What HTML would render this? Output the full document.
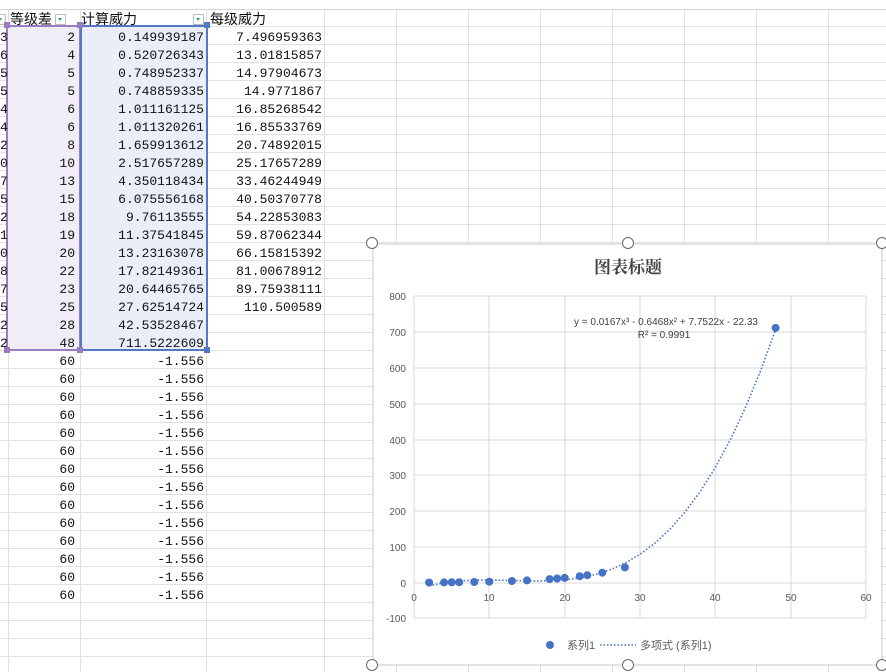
<!DOCTYPE html>
<html><head><meta charset="utf-8"><style>
body{margin:0;width:886px;height:672px;overflow:hidden;background:#fff;position:relative;font-family:"Liberation Mono","Noto Sans CJK SC",monospace;}
.grid{position:absolute;left:0;top:9px;width:886px;height:663px;
background-image:repeating-linear-gradient(to bottom,transparent 0 17px,#e1e1e1 17px 18px);}
.vl{position:absolute;top:0;width:1px;height:672px;background:#e1e1e1}
.top{position:absolute;left:0;top:0;width:886px;height:9px;border-bottom:1px solid #d4d4d4;background:#fff}
.selB{position:absolute;left:6px;top:25px;width:75px;height:326px;background:#f1edf6;border:2px solid #9a7cc0;box-sizing:border-box}
.selC{position:absolute;left:80px;top:25px;width:128px;height:326px;background:#e9eef8;border:2px solid #5677c4;box-sizing:border-box}
table{position:absolute;left:0;top:10px;border-collapse:collapse;border-spacing:0;font-size:13px;color:#111;table-layout:fixed}
tr{height:18px}
td{height:18px;padding:0 5px 0 0;text-align:right;white-space:nowrap;line-height:17px;overflow:hidden;box-sizing:border-box}
td.a{width:8px;padding:0;text-align:left}td.b{width:72px}td.c{width:126px}td.d{width:118px}
tr.h td{text-align:left;font-family:"Liberation Sans","Noto Sans CJK SC",sans-serif;font-size:14px;overflow:visible}
.fl{display:inline-block;width:9px;height:9px;border:1px solid #bbb;background:#fff;vertical-align:middle;position:relative}
.fl:after{content:"";position:absolute;left:2px;top:3px;border-left:2.5px solid transparent;border-right:2.5px solid transparent;border-top:3px solid #2a9d6f}
.h1{position:absolute;width:10px;height:10px;border-radius:50%;border:1px solid #666;background:#fff}
</style></head><body>
<div class="grid"></div>
<div class="vl" style="left:8px"></div><div class="vl" style="left:80px"></div><div class="vl" style="left:206px"></div><div class="vl" style="left:324px"></div>
<div class="vl" style="left:396px"></div><div class="vl" style="left:468px"></div><div class="vl" style="left:540px"></div><div class="vl" style="left:612px"></div><div class="vl" style="left:684px"></div><div class="vl" style="left:756px"></div><div class="vl" style="left:828px"></div>
<div class="top"></div>
<div class="selB"></div><div class="selC"></div>
<table>
<tr class="h"><td class="a"><span class="fl" style="margin-left:-5px"></span></td><td class="b" style="padding-left:2px">等级差<span class="fl" style="margin-left:3px"></span></td><td class="c" style="padding-left:1px">计算威力<span class="fl" style="margin-left:56px"></span></td><td class="d" style="padding-left:1px">每级威力</td></tr>
<tr><td class="a">3</td><td>2</td><td>0.149939187</td><td>7.496959363</td></tr>
<tr><td class="a">6</td><td>4</td><td>0.520726343</td><td>13.01815857</td></tr>
<tr><td class="a">5</td><td>5</td><td>0.748952337</td><td>14.97904673</td></tr>
<tr><td class="a">5</td><td>5</td><td>0.748859335</td><td>14.9771867</td></tr>
<tr><td class="a">4</td><td>6</td><td>1.011161125</td><td>16.85268542</td></tr>
<tr><td class="a">4</td><td>6</td><td>1.011320261</td><td>16.85533769</td></tr>
<tr><td class="a">2</td><td>8</td><td>1.659913612</td><td>20.74892015</td></tr>
<tr><td class="a">0</td><td>10</td><td>2.517657289</td><td>25.17657289</td></tr>
<tr><td class="a">7</td><td>13</td><td>4.350118434</td><td>33.46244949</td></tr>
<tr><td class="a">5</td><td>15</td><td>6.075556168</td><td>40.50370778</td></tr>
<tr><td class="a">2</td><td>18</td><td>9.76113555</td><td>54.22853083</td></tr>
<tr><td class="a">1</td><td>19</td><td>11.37541845</td><td>59.87062344</td></tr>
<tr><td class="a">0</td><td>20</td><td>13.23163078</td><td>66.15815392</td></tr>
<tr><td class="a">8</td><td>22</td><td>17.82149361</td><td>81.00678912</td></tr>
<tr><td class="a">7</td><td>23</td><td>20.64465765</td><td>89.75938111</td></tr>
<tr><td class="a">5</td><td>25</td><td>27.62514724</td><td>110.500589</td></tr>
<tr><td class="a">2</td><td>28</td><td>42.53528467</td><td></td></tr>
<tr><td class="a">2</td><td>48</td><td>711.5222609</td><td></td></tr>
<tr><td class="a"></td><td>60</td><td>-1.556</td><td></td></tr>
<tr><td class="a"></td><td>60</td><td>-1.556</td><td></td></tr>
<tr><td class="a"></td><td>60</td><td>-1.556</td><td></td></tr>
<tr><td class="a"></td><td>60</td><td>-1.556</td><td></td></tr>
<tr><td class="a"></td><td>60</td><td>-1.556</td><td></td></tr>
<tr><td class="a"></td><td>60</td><td>-1.556</td><td></td></tr>
<tr><td class="a"></td><td>60</td><td>-1.556</td><td></td></tr>
<tr><td class="a"></td><td>60</td><td>-1.556</td><td></td></tr>
<tr><td class="a"></td><td>60</td><td>-1.556</td><td></td></tr>
<tr><td class="a"></td><td>60</td><td>-1.556</td><td></td></tr>
<tr><td class="a"></td><td>60</td><td>-1.556</td><td></td></tr>
<tr><td class="a"></td><td>60</td><td>-1.556</td><td></td></tr>
<tr><td class="a"></td><td>60</td><td>-1.556</td><td></td></tr>
<tr><td class="a"></td><td>60</td><td>-1.556</td><td></td></tr>
</table>
<div style="position:absolute;left:4px;top:347px;width:6px;height:6px;background:#9a7cc0"></div>
<div style="position:absolute;left:77px;top:347px;width:6px;height:6px;background:#9a7cc0"></div>
<div style="position:absolute;left:4px;top:22px;width:6px;height:6px;background:#9a7cc0"></div>
<div style="position:absolute;left:77px;top:22px;width:6px;height:6px;background:#9a7cc0"></div>
<div style="position:absolute;left:204px;top:347px;width:6px;height:6px;background:#5677c4"></div>
<div style="position:absolute;left:204px;top:22px;width:6px;height:6px;background:#5677c4"></div>

<svg style="position:absolute;left:0;top:0" width="886" height="672">
<rect x="373" y="244" width="509" height="421" fill="#fff" stroke="#c8c8c8"/>
<text x="628" y="273" text-anchor="middle" font-family="Liberation Sans,Noto Serif CJK SC,sans-serif" font-weight="bold" font-size="17" fill="#444">图表标题</text>
<g stroke="#d9d9d9" stroke-width="1">
<line x1="414" y1="296" x2="866" y2="296"/><line x1="414" y1="332" x2="866" y2="332"/><line x1="414" y1="368" x2="866" y2="368"/><line x1="414" y1="404" x2="866" y2="404"/><line x1="414" y1="440" x2="866" y2="440"/><line x1="414" y1="475" x2="866" y2="475"/><line x1="414" y1="511" x2="866" y2="511"/><line x1="414" y1="547" x2="866" y2="547"/><line x1="414" y1="583" x2="866" y2="583"/><line x1="414" y1="618" x2="866" y2="618"/>
<line x1="414" y1="296" x2="414" y2="618"/><line x1="489" y1="296" x2="489" y2="618"/><line x1="565" y1="296" x2="565" y2="618"/><line x1="640" y1="296" x2="640" y2="618"/><line x1="715" y1="296" x2="715" y2="618"/><line x1="791" y1="296" x2="791" y2="618"/><line x1="866" y1="296" x2="866" y2="618"/>
</g>
<g font-family="Liberation Sans,sans-serif" font-size="10" fill="#595959" text-anchor="end">
<text x="406" y="300">800</text><text x="406" y="336">700</text><text x="406" y="372">600</text><text x="406" y="408">500</text><text x="406" y="444">400</text><text x="406" y="479">300</text><text x="406" y="515">200</text><text x="406" y="551">100</text><text x="406" y="587">0</text><text x="406" y="622">-100</text>
</g>
<g font-family="Liberation Sans,sans-serif" font-size="10" fill="#595959" text-anchor="middle">
<text x="414" y="601">0</text><text x="489" y="601">10</text><text x="565" y="601">20</text><text x="640" y="601">30</text><text x="715" y="601">40</text><text x="791" y="601">50</text><text x="866" y="601">60</text>
</g>
<g fill="#4472c4">
<circle cx="429.1" cy="582.5" r="4"/><circle cx="444.1" cy="582.4" r="4"/><circle cx="451.7" cy="582.3" r="4"/><circle cx="459.2" cy="582.2" r="4"/><circle cx="474.3" cy="582" r="4"/><circle cx="489.3" cy="581.7" r="4"/><circle cx="511.9" cy="581" r="4"/><circle cx="527" cy="580.4" r="4"/><circle cx="549.6" cy="579.1" r="4"/><circle cx="557.1" cy="578.5" r="4"/><circle cx="564.7" cy="577.9" r="4"/><circle cx="579.7" cy="576.2" r="4"/><circle cx="587.3" cy="575.2" r="4"/><circle cx="602.3" cy="572.7" r="4"/><circle cx="624.9" cy="567.4" r="4"/><circle cx="775.6" cy="327.9" r="4"/>
</g>
<g transform="translate(414,582.6) scale(7.533,-0.358)">
<polyline vector-effect="non-scaling-stroke" fill="none" stroke="#4472c4" stroke-width="1.6" stroke-dasharray="1.5 2" points="2,-9.28 4,-0.6 6,4.5 8,6.84 10,7.21 12,6.42 14,5.26 16,4.53 18,5.04 20,7.59 22,12.97 24,22.06 26,35.49 28,54.24 30,79.02 32,110.6 34,149.9 36,197.7 38,254.6 40,321.7 42,399.6 44,489.2 46,591.2 48,706.5"/>
</g>
<text x="666" y="325" text-anchor="middle" font-family="Liberation Sans,sans-serif" font-size="10" fill="#404040">y = 0.0167x³ - 0.6468x² + 7.7522x - 22.33</text>
<text x="664" y="338" text-anchor="middle" font-family="Liberation Sans,sans-serif" font-size="10" fill="#404040">R² = 0.9991</text>
<circle cx="550" cy="645" r="4" fill="#4472c4"/>
<text x="567" y="649" font-family="Liberation Sans,Noto Sans CJK SC,sans-serif" font-size="11" fill="#595959">系列1</text>
<line x1="600" y1="645" x2="636" y2="645" stroke="#4472c4" stroke-width="1.6" stroke-dasharray="1.5 2"/>
<text x="640" y="649" font-family="Liberation Sans,Noto Sans CJK SC,sans-serif" font-size="11" fill="#595959">多项式 (系列1)</text>
</svg>
<div class="h1" style="left:366px;top:237px"></div><div class="h1" style="left:622px;top:237px"></div><div class="h1" style="left:876px;top:237px"></div>
<div class="h1" style="left:366px;top:659px"></div><div class="h1" style="left:622px;top:659px"></div><div class="h1" style="left:876px;top:659px"></div>
</body></html>
